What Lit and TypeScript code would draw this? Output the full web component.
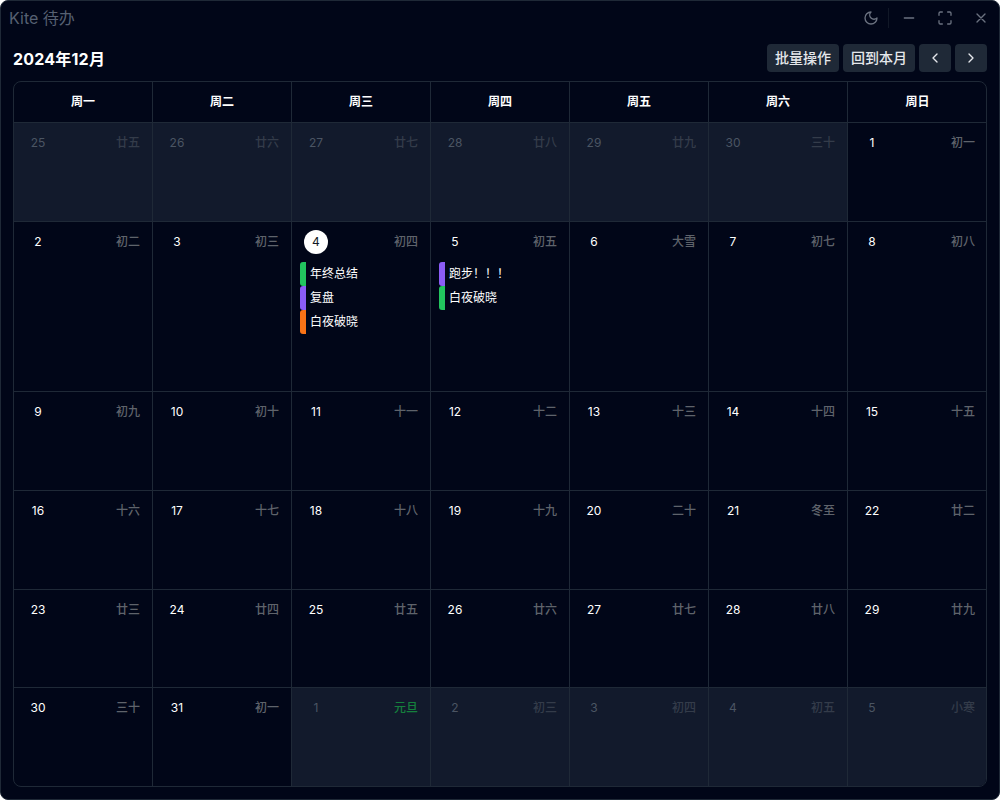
import { LitElement, html, css } from "lit";
import { customElement } from "lit/decorators.js";

type Ev = { t: string; c: string };
type Day = { d: number; l: string; other?: boolean; today?: boolean; holiday?: boolean; ev?: Ev[] };

const G = "#22c55e", P = "#8b5cf6", O = "#f97316";
const mk = (s: string, start: number, other = false): Day[] =>
  s.split(" ").map((l, i) => ({ d: start + i, l, other }));

const days: Day[] = [
  ...mk("廿五 廿六 廿七 廿八 廿九 三十", 25, true),
  ...mk("初一 初二 初三 初四 初五 大雪 初七 初八 初九 初十 十一 十二 十三 十四 十五 十六 十七 十八 十九 二十 冬至 廿二 廿三 廿四 廿五 廿六 廿七 廿八 廿九 三十 初一", 1),
  ...mk("元旦 初三 初四 初五 小寒", 1, true),
];
days[9].today = true;
days[9].ev = [{ t: "年终总结", c: G }, { t: "复盘", c: P }, { t: "白夜破晓", c: O }];
days[10].ev = [{ t: "跑步！！！", c: P }, { t: "白夜破晓", c: G }];
days[37].holiday = true;

@customElement("app-root")
export class AppRoot extends LitElement {
  static styles = css`
    :host { display: block; width: 1000px; height: 800px; background: #fff;
      font-family: Inter, "Noto Sans CJK SC", sans-serif; }
    .win { box-sizing: border-box; width: 1000px; height: 800px; background: #010618;
      border: 1px solid #1f2937; border-radius: 8px; display: flex; flex-direction: column; overflow: hidden; }
    .titlebar { height: 34px; flex: none; display: flex; align-items: center; justify-content: space-between; padding: 0 0 0 8px; }
    .app { font-size: 16px; color: #566072; padding-bottom: 3px; }
    .ctrls { display: flex; align-items: center; color: #6b7280; }
    .ctrls svg { display: block; }
    .ico { width: 36px; height: 34px; display: flex; align-items: center; justify-content: center; }
    .ico.moon { width: 30px; }
    .sep { width: 1px; height: 20px; background: #111827; margin: 0 2px; }
    .head { flex: none; height: 46px; display: flex; align-items: center; justify-content: space-between; padding: 0 12px; box-sizing: border-box; }
    .month { font-size: 16px; font-weight: 700; color: #fff; letter-spacing: 0.2px; }
    .btns { display: flex; gap: 4px; }
    .btn { height: 28px; box-sizing: border-box; background: #1f2937; border-radius: 4px; color: #e5e7eb;
      font-size: 14px; line-height: 20px; font-weight: 500; padding: 0 8px; display: flex; align-items: center; justify-content: center; }
    .btn.sq { width: 32px; padding: 0; }
    .cal { margin: 0 12px; height: 706px; box-sizing: border-box; border: 1px solid #1f2937; border-radius: 8px; overflow: hidden;
      display: grid; grid-template-columns: repeat(7, 139px); grid-template-rows: 40px 99px 170px 99px 99px 98px 99px; }
    .wk { display: flex; align-items: center; justify-content: center; font-size: 12px; line-height: 16px; font-weight: 700; color: #fff;
      border-right: 1px solid #1f2937; box-sizing: border-box; }
    .cell { box-sizing: border-box; border-top: 1px solid #1f2937; border-right: 1px solid #1f2937; padding: 8px 0 0; min-width: 0; }
    .wk:nth-child(7n), .cell:nth-child(7n) { border-right: none; }
    .cell.other { background: #121a2c; }
    .top { display: flex; align-items: center; justify-content: space-between; height: 24px; padding: 0 12px; }
    .num { width: 24px; height: 24px; border-radius: 50%; box-sizing: border-box; display: flex; align-items: center; justify-content: center;
      font-size: 12px; line-height: 16px; color: #fff; }
    .num.today { background: #fff; color: #111827; }
    .other .num { color: #4b5563; }
    .lunar { font-size: 12px; line-height: 16px; color: #5f636b; font-weight: 500; }
    .other .lunar { color: #343c4a; }
    .other .lunar.hol { color: #15803d; }
    .evs { margin-top: 8px; padding-left: 8px; }
    .ev { height: 24px; display: flex; align-items: center; gap: 4px; font-size: 12px; line-height: 16px; color: #fff; }
    .bar { width: 6px; height: 24px; border-radius: 3px 0 0 3px; flex: none; }
  `;

  render() {
    const weeks = ["周一", "周二", "周三", "周四", "周五", "周六", "周日"];
    return html`<div class="win">
      <div class="titlebar">
        <div class="app">Kite 待办</div>
        <div class="ctrls">
          <span class="ico moon"><svg width="16" height="16" viewBox="0 0 24 24" fill="none" stroke="currentColor" stroke-width="2" stroke-linecap="round" stroke-linejoin="round"><path d="M12 3a6 6 0 0 0 9 9 9 9 0 1 1-9-9Z"/></svg></span>
          <span class="sep"></span>
          <span class="ico"><svg width="16" height="16" viewBox="0 0 24 24" fill="none" stroke="currentColor" stroke-width="2" stroke-linecap="round"><path d="M5 12h14"/></svg></span>
          <span class="ico"><svg width="16" height="16" viewBox="0 0 24 24" fill="none" stroke="currentColor" stroke-width="2" stroke-linecap="round" stroke-linejoin="round"><path d="M8 3H5a2 2 0 0 0-2 2v3M21 8V5a2 2 0 0 0-2-2h-3M3 16v3a2 2 0 0 0 2 2h3M16 21h3a2 2 0 0 0 2-2v-3"/></svg></span>
          <span class="ico"><svg width="16" height="16" viewBox="0 0 24 24" fill="none" stroke="currentColor" stroke-width="2" stroke-linecap="round"><path d="M18 6 6 18M6 6l12 12"/></svg></span>
        </div>
      </div>
      <div class="head">
        <div class="month">2024年12月</div>
        <div class="btns">
          <div class="btn">批量操作</div>
          <div class="btn">回到本月</div>
          <div class="btn sq"><svg width="16" height="16" viewBox="0 0 24 24" fill="none" stroke="currentColor" stroke-width="2" stroke-linecap="round" stroke-linejoin="round"><path d="m15 18-6-6 6-6"/></svg></div>
          <div class="btn sq"><svg width="16" height="16" viewBox="0 0 24 24" fill="none" stroke="currentColor" stroke-width="2" stroke-linecap="round" stroke-linejoin="round"><path d="m9 18 6-6-6-6"/></svg></div>
        </div>
      </div>
      <div class="cal">
        ${weeks.map((w) => html`<div class="wk">${w}</div>`)}
        ${days.map((d) => html`<div class="cell ${d.other ? "other" : ""}">
          <div class="top">
            <span class="num ${d.today ? "today" : ""}">${d.d}</span>
            <span class="lunar ${d.holiday ? "hol" : ""}">${d.l}</span>
          </div>
          ${d.ev ? html`<div class="evs">${d.ev.map((e) => html`<div class="ev"><span class="bar" style="background:${e.c}"></span><span>${e.t}</span></div>`)}</div>` : ""}
        </div>`)}
      </div>
    </div>`;
  }
}
